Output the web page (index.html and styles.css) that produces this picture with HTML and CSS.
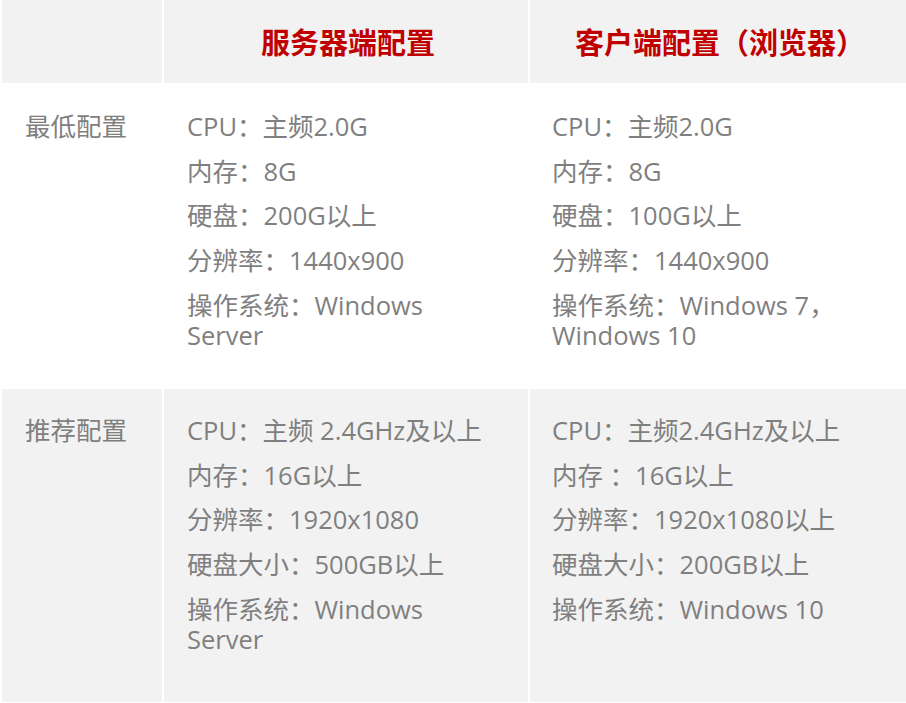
FILE: index.html
```html
<!DOCTYPE html>
<html lang="zh-CN">
<head>
<meta charset="utf-8">
<title>配置要求</title>
<link rel="stylesheet" href="styles.css">
</head>
<body>
<div class="spec-table">
  <div class="cell head"></div>
  <div class="cell head"><span class="head-text">服务器端配置</span></div>
  <div class="cell head"><span class="head-text">客户端配置（浏览器）</span></div>

  <div class="cell plain"><p>最低配置</p></div>
  <div class="cell plain">
    <p>CPU：主频2.0G</p>
    <p>内存：8G</p>
    <p>硬盘：200G以上</p>
    <p>分辨率：1440x900</p>
    <p>操作系统：Windows<br>Server</p>
  </div>
  <div class="cell plain last">
    <p>CPU：主频2.0G</p>
    <p>内存：8G</p>
    <p>硬盘：100G以上</p>
    <p>分辨率：1440x900</p>
    <p>操作系统：Windows 7，<br>Windows 10</p>
  </div>

  <div class="cell shaded"><p>推荐配置</p></div>
  <div class="cell shaded">
    <p>CPU：主频 2.4GHz及以上</p>
    <p>内存：16G以上</p>
    <p>分辨率：1920x1080</p>
    <p>硬盘大小：500GB以上</p>
    <p>操作系统：Windows<br>Server</p>
  </div>
  <div class="cell shaded last">
    <p>CPU：主频2.4GHz及以上</p>
    <p>内存 ：16G以上</p>
    <p>分辨率：1920x1080以上</p>
    <p>硬盘大小：200GB以上</p>
    <p>操作系统：Windows 10</p>
  </div>
</div>
</body>
</html>
```
FILE: styles.css
```css
html, body {
  margin: 0;
  padding: 0;
  background: #ffffff;
}

body {
  width: 906px;
  height: 703px;
  overflow: hidden;
  font-family: "Open Sans", "Noto Sans CJK SC", sans-serif;
  color: #7f7f7f;
}

.spec-table {
  display: grid;
  grid-template-columns: 160px 364px 376px;
  grid-template-rows: 83px 302px 313px;
  gap: 2px;
  padding-left: 2px;
}

.cell {
  box-sizing: border-box;
  padding: 26px 20px 0 23px;
  font-size: 25.5px;
}

.cell.last {
  padding-left: 22px;
}

.cell p {
  margin: 0 0 14.7px;
  line-height: 30px;
  white-space: nowrap;
}

.head {
  background: #f2f2f2;
  padding: 0;
  display: flex;
  align-items: center;
  justify-content: center;
}

.head-text {
  font-family: "Noto Sans CJK SC", sans-serif;
  font-weight: 700;
  font-size: 29px;
  color: #c00000;
  line-height: 1;
  padding-left: 4px;
}

.plain {
  background: #ffffff;
}

.shaded {
  background: #f2f2f2;
}
```
